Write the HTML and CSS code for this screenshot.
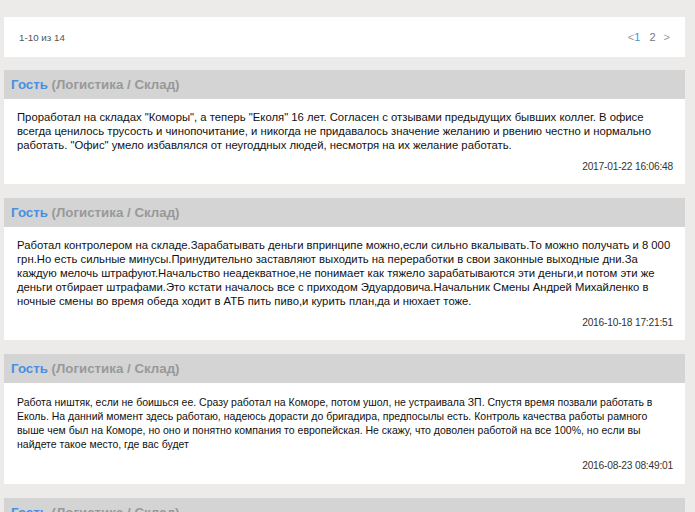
FILE: index.html
```html
<!DOCTYPE html>
<html lang="ru">
<head>
    <meta charset="UTF-8">
    <meta name="viewport" content="width=device-width, initial-scale=1.0">
    <title>Отзывы сотрудников</title>
    <link rel="stylesheet" href="styles.css">
</head>
<body>
    <div class="page">
        <h2 class="page-title">Отзывы о работе</h2>

        <div class="pager">
            <span class="pager-count">1-10 из 14</span>
            <div class="pager-links">
                <a class="pager-arrow">&lt;</a><a class="pager-current">1</a>
                <a class="pager-page">2</a>
                <a class="pager-arrow">&gt;</a>
            </div>
        </div>

        <div class="review">
            <div class="review-head">
                <span class="review-author">Гость</span>
                <span class="review-dept">(Логистика / Склад)</span>
            </div>
            <div class="review-body">
                <p class="review-text">Проработал на складах "Коморы", а теперь "Еколя" 16 лет. Согласен с отзывами предыдущих бывших коллег. В офисе всегда ценилось трусость и чинопочитание, и никогда не придавалось значение желанию и рвению честно и нормально работать. "Офис" умело избавлялся от неугоддных людей, несмотря на их желание работать.</p>
                <div class="review-date">2017-01-22 16:06:48</div>
            </div>
        </div>

        <div class="review">
            <div class="review-head">
                <span class="review-author">Гость</span>
                <span class="review-dept">(Логистика / Склад)</span>
            </div>
            <div class="review-body">
                <p class="review-text">Работал контролером на складе.Зарабатывать деньги впринципе можно,если сильно вкалывать.То можно получать и 8 000 грн.Но есть сильные минусы.Принудительно заставляют выходить на переработки в свои законные выходные дни.За каждую мелочь штрафуют.Начальство неадекватное,не понимает как тяжело зарабатываются эти деньги,и потом эти же деньги отбирает штрафами.Это кстати началось все с приходом Эдуардовича.Начальник Смены Андрей Михайленко в ночные смены во время обеда ходит в АТБ пить пиво,и курить план,да и нюхает тоже.</p>
                <div class="review-date">2016-10-18 17:21:51</div>
            </div>
        </div>

        <div class="review">
            <div class="review-head">
                <span class="review-author">Гость</span>
                <span class="review-dept">(Логистика / Склад)</span>
            </div>
            <div class="review-body review-body-loose">
                <p class="review-text review-text-small">Работа ништяк, если не боишься ее. Сразу работал на Коморе, потом ушол, не устраивала ЗП. Спустя время позвали работать в Еколь. На данний момент здесь работаю, надеюсь дорасти до бригадира, предпосылы есть. Контроль качества работы рамного выше чем был на Коморе, но оно и понятно компания то европейская. Не скажу, что доволен работой на все 100%, но если вы найдете такое место, где вас будет</p>
                <div class="review-date">2016-08-23 08:49:01</div>
            </div>
        </div>

        <div class="review">
            <div class="review-head">
                <span class="review-author">Гость</span>
                <span class="review-dept">(Логистика / Склад)</span>
            </div>
            <div class="review-body">
                <p class="review-text">Нормальная работа.</p>
            </div>
        </div>
    </div>
</body>
</html>
```

FILE: styles.css
```css
body {
    margin: 0;
    background-color: #ecebe9;
    font-family: "Liberation Sans", Arial, sans-serif;
    color: #1a1a1a;
    overflow: hidden;
}

.page {
    width: 681px;
    margin: -22px 0 0 4px;
}

.page-title {
    margin: 0 0 17px 0;
    font-size: 18px;
    line-height: 22px;
    color: #111;
}

.pager {
    display: flex;
    justify-content: space-between;
    align-items: center;
    height: 40px;
    padding: 0 15px;
    background-color: #fff;
    font-size: 9.8px;
    color: #555;
}

.pager-links {
    font-size: 11px;
    color: #777;
}

.pager-links a {
    cursor: pointer;
}

.pager-arrow {
    color: #999;
}

.pager-current {
    color: #4a8fe0;
    margin-right: 6px;
}

.pager-page {
    margin-right: 5px;
}

.review {
    margin-top: 14px;
    background-color: #fff;
}

.pager + .review {
    margin-top: 13px;
}

.review-head {
    padding: 6px 7px;
    background-color: #d4d4d4;
    font-size: 13.3px;
    line-height: 17px;
    font-weight: bold;
}

.review-author {
    color: #4a8fe0;
}

.review-dept {
    color: #999;
}

.review-body {
    padding: 11px 12px 10px 13px;
}

.review-body-loose {
    padding-top: 12px;
    padding-bottom: 11px;
}

.review-text {
    margin: 0;
    font-size: 11.3px;
    line-height: 14px;
    color: #111;
}

.review-text-small {
    margin-bottom: 2px;
    font-size: 10.5px;
}

.review-date {
    margin-top: 8px;
    text-align: right;
    font-size: 10.2px;
    letter-spacing: -0.2px;
    line-height: 14px;
    color: #333;
}
```
